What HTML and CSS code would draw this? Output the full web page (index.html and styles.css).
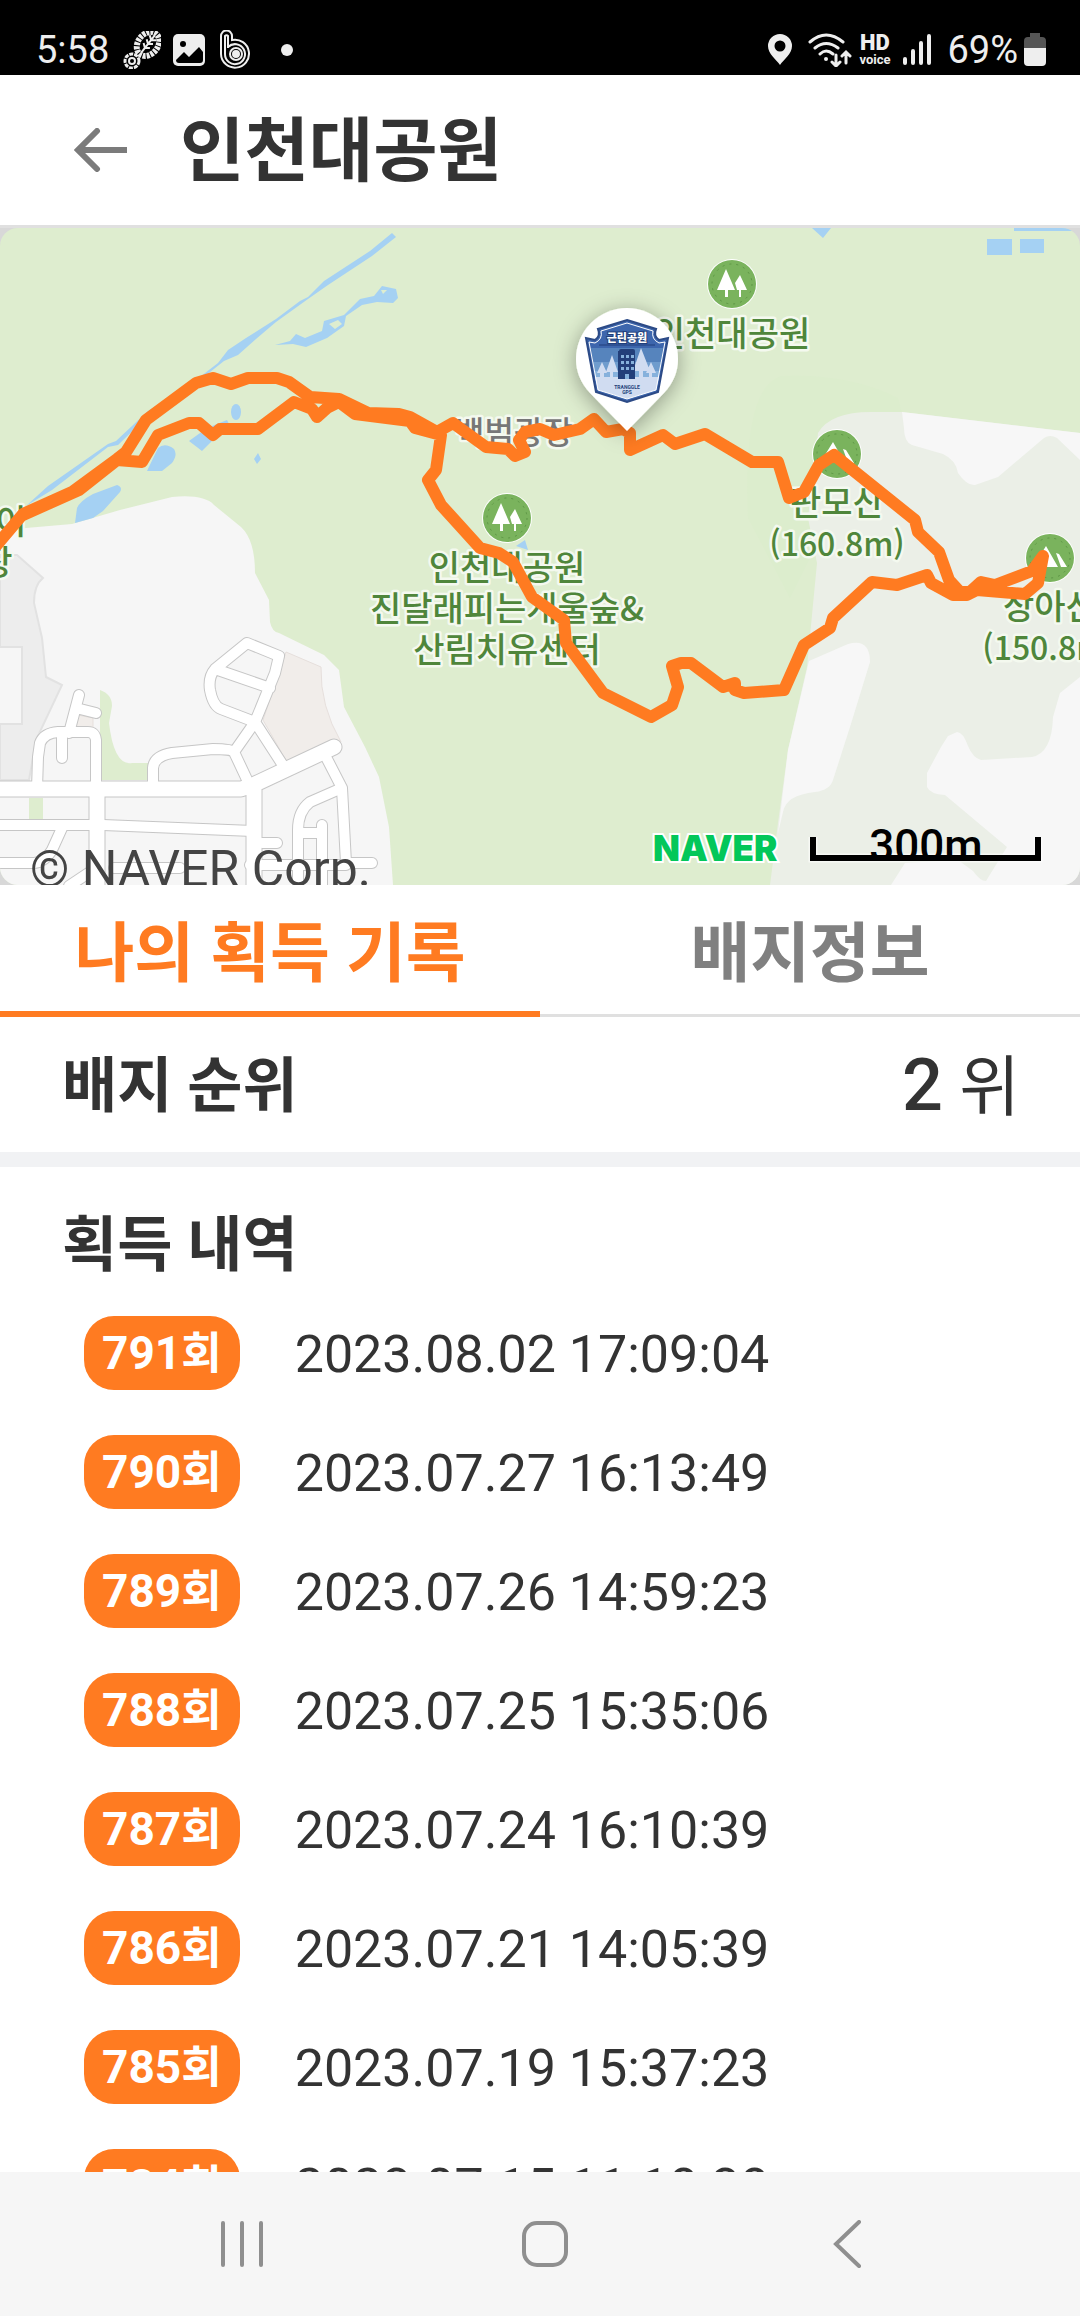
FILE: index.html
```
<!DOCTYPE html>
<html lang="ko">
<head>
  <meta charset="UTF-8" />
  <meta name="viewport" content="width=device-width, initial-scale=1.0"/>
  <title>인천대공원</title>
  <link rel="stylesheet" href="styles.css">
</head>
<body>
  <div class="status-bar">
    <div class="status-left">
      <span class="clock">5:58</span>
      <svg class="ic-shoe" width="38" height="38" viewBox="0 0 38 38">
        <g transform="rotate(38 25 13)">
          <ellipse cx="25" cy="13" rx="10" ry="13" fill="none" stroke="#eee" stroke-width="6" stroke-dasharray="3 1"/>
          <path d="M25 2v22M21 5l4 3 4-3M21 10l4 3 4-3M21 15l4 3 4-3" stroke="#eee" stroke-width="2" fill="none"/>
        </g>
        <circle cx="9" cy="30" r="7" fill="none" stroke="#eee" stroke-width="3" stroke-dasharray="4 1"/>
        <circle cx="9" cy="30" r="3" fill="none" stroke="#eee" stroke-width="2"/>
      </svg>
      <svg class="ic-image" width="32" height="32" viewBox="0 0 32 32">
        <rect width="32" height="32" rx="5" fill="#eee"/>
        <circle cx="10" cy="10" r="3" fill="#000"/>
        <path d="M3 26l8-8 5 5 10-10 4 5v8q0 3-3 3H6q-3 0-3-3z" fill="#000"/>
      </svg>
      <svg class="ic-band" width="32" height="40" viewBox="0 0 32 40" fill="none" stroke="#eee" stroke-width="2">
        <path d="M1 24V6a5 5 0 0 1 11 0v4a14 14 0 1 1-11 14z"/>
        <path d="M5 24V6a2 2 0 0 1 3 0v12M8 17a10 10 0 1 1-3 7"/>
        <circle cx="16" cy="24" r="6"/>
        <circle cx="16" cy="24" r="3" fill="#eee"/>
      </svg>
      <span class="dot"></span>
    </div>
    <div class="status-right">
      <svg class="ic-pin" width="24" height="31" viewBox="0 0 24 31">
        <path fill="#eee" fill-rule="evenodd" d="M12 0a12 12 0 0 1 12 12c0 8-8 13-12 19C8 25 0 20 0 12A12 12 0 0 1 12 0zm0 6.500a5.500 5.500 0 1 0 0 11 5.500 5.500 0 0 0 0-11z"/>
      </svg>
      <svg class="ic-wifi" width="44" height="34" viewBox="0 0 44 34" fill="none" stroke="#eee" stroke-width="3" stroke-linecap="round">
        <path d="M2 9q16-14 33 0M7 15q11-9 23 0M12 21q6-6 13 0"/>
        <circle cx="18" cy="26" r="2" fill="#eee" stroke="none"/>
        <path d="M28 22v10M24 29l4 4 4-4M38 30V20M34 23l4-4 4 4"/>
      </svg>
      <span class="hd"><b>HD</b><small>voice</small></span>
      <svg class="ic-signal" width="28" height="31" viewBox="0 0 28 31" stroke="#eee" stroke-width="4" stroke-linecap="round">
        <path d="M2 25v4M10 17v12M18 9v20M26 2v27"/>
      </svg>
      <span class="percent">69%</span>
      <svg width="22" height="33" viewBox="0 0 22 33">
        <path d="M6 0h10v4h2q4 0 4 4v8H0V8q0-4 4-4h2z" fill="#555"/>
        <path d="M0 15h22v14q0 4-4 4H4q-4 0-4-4z" fill="#eee"/>
      </svg>
    </div>
  </div>

  <header class="title-bar">
    <button class="back-btn" aria-label="뒤로">
      <svg width="54" height="44" viewBox="0 0 54 44" fill="none" stroke="#7b7b7b" stroke-width="6">
        <path d="M53 22H5"/>
        <path d="M23 3L4 22l19 19" stroke-linecap="round"/>
      </svg>
    </button>
    <h1>인천대공원</h1>
  </header>

  <main class="content">
    <div class="map">
      <svg class="map-svg" viewBox="0 0 1080 657">
        <defs>
          <g id="pine">
            <circle r="25" fill="#fff"/>
            <circle r="24" fill="#7ab35d"/>
            <circle r="20" fill="none" stroke="#5d9645" stroke-width="1" stroke-dasharray="2 5"/>
            <path d="M-6-15L3 6h-7v7h-3V6h-8zM8-9l7 15H9v7H7V6H5L3-1z" fill="#fff"/>
          </g>
          <g id="peak">
            <circle r="25" fill="#fff"/>
            <circle r="24" fill="#7ab35d"/>
            <circle r="20" fill="none" stroke="#5d9645" stroke-width="1" stroke-dasharray="2 5"/>
            <path d="M-17 9L-4-12 8 9zM6-5L9-4l8 13h-6z" fill="#fff"/>
          </g>
          <filter id="pinShadow" x="-50%" y="-50%" width="200%" height="200%">
            <feDropShadow dx="0" dy="4" stdDeviation="11" flood-color="#000" flood-opacity="0.35"/>
          </filter>
          <g id="streets">
            <path class="wide" d="M-9 561H241L253 557 334 519M254 560V670M97 561V670"/>
            <path d="M-9 597H103L253 603M96 560V512Q95 504 88 504H58Q44 505 40 515L38 529 37 561M62 505V530M69 505L79 467M76 480L96 485"/>
            <path d="M255 494L221 481Q213 478 210 462 208 449 215 441L247 415 279 428 275 445ZM215 441L270 460M255 494L234 524Q231 521 213 521L172 525Q154 528 153 540V560M234 524L250 558M255 494L286 542"/>
            <path d="M262 615H277M325 527L342 560 346 635H372M342 560L310 574Q298 583 298 602V670M298 605H320M322 597V670M-9 635H34Q45 634 52 622L62 600M69 658L90 644M250 637H346M114 640H180"/>
          </g>
        </defs>

        <!-- land -->
        <rect width="1080" height="657" fill="#deedcf"/>
        <path d="M781 148Q850 145 898 170L902 185 817 300 810 330 790 370 748 290Q742 160 781 148Z" fill="#dcedcd"/>
        <path d="M0 304L26 300 72 296 120 282 172 269Q204 266 214 277L241 299Q255 312 255 345L269 372 270 394Q272 404 279 405L324 427 339 442 344 479 365 519 379 549 389 599 393 657H0Z" fill="#f6f6f6"/>
        <path d="M817 335L808 290 818 205Q830 184 871 184H902L1080 205V657H770L778 595 788 522 807 439 817 335Z" fill="#ebefe7"/>
        <path d="M902 184L1080 205V232L1057 210Q1050 206 1044 210L998 249 975 257Q967 258 958 245 956 232 943 226L912 217Q904 214 904 200Z" fill="#f7f7f7"/>
        <path d="M809 433L848 416Q870 410 870 434L850 499 833 552Q830 562 815 564 786 567 783 584L778 605 788 522Z" fill="#f7f7f7"/>
        <path d="M1080 449L1060 465 1053 489Q1052 525 1032 529L981 532Q973 530 968 518 963 504 957 504L948 508 941 519 927 545V559Q930 566 945 567L1007 619 986 653Q980 653 973 643L958 632 905 635 891 657H1080Z" fill="#f7f7f7"/>
        <path d="M0 327H17L43 350Q34 357 34 375L42 410 46 449 62 457 36 512 29 552H0Z" fill="#ededed" stroke="#e2e2e2" stroke-width="2"/>
        <rect x="-2" y="419" width="24" height="77" fill="#f6f6f6" stroke="#e2e2e2" stroke-width="2"/>
        <path d="M100 462Q112 466 112 478L109 495Q114 538 132 535H148V552H100ZM29 570H43V594H29Z" fill="#deedcf"/>
        <path d="M286 424L321 439Q320 478 341 514L288 536 263 492ZM78 487L93 490V502H74Z" fill="#f1edea" stroke="#e6dfdc" stroke-width="1"/>

        <!-- water -->
        <g fill="#a5d1f3">
          <path d="M392 5L396 9 372 28 328 57 308 71 276 94 256 111 238 127 224 133 200 152 148 188 118 217 108 219 52 262 26 278 48 258 108 216 116 213 148 183 196 152 218 135 228 122 246 110 276 91 300 73 308 69 324 53 370 23Z"/>
          <path fill-rule="evenodd" d="M275 117L290 113 296 106 305 110 322 103 324 93 344 87 360 71 374 68 382 58 396 61 398 70 393 75 377 74 362 77 346 88 344 98 327 110 306 119 293 116ZM329 96L338 92 342 96 335 101ZM381 62L387 62 383 66Z"/>
          <path d="M75 295L77 280Q80 273 93 266L117 257Q123 259 120 264L103 283 93 290ZM147 243L158 220Q165 214 174 221 178 227 172 235L162 243ZM189 213L207 200 227 192 229 196 202 223Z"/>
          <ellipse cx="236" cy="184" rx="5" ry="8"/>
          <path d="M254 231L258 225 261 231 257 236ZM812 0H831L823 10ZM987 11H1012V27H987ZM1020 11H1044V25H1020ZM1014 0H1080V3H1014ZM516 318L525 312 528 322Z"/>
        </g>

        <use href="#streets" class="street-edge"/>
        <use href="#streets" class="street-fill"/>

        <use href="#pine" x="732" y="56"/>
        <use href="#pine" x="507" y="290"/>
        <use href="#peak" x="837" y="226"/>
        <use href="#peak" x="1050" y="330"/>

        <g class="map-label">
          <text x="732" y="118">인천대공원</text>
          <text x="507" y="352">인천대공원</text>
          <text x="507" y="393">진달래피는개울숲&amp;</text>
          <text x="507" y="434">산림치유센터</text>
          <text x="837" y="287">판모산</text>
          <text class="elevation" x="837" y="328">(160.8m)</text>
          <text x="1050" y="391">상아산</text>
          <text class="elevation" x="1050" y="432">(150.8m)</text>
          <text x="11" y="306">이</text>
          <text x="-3" y="347">장</text>
          <text class="place" x="514" y="216">백범광장</text>
        </g>

        <path class="route" d="M-4 318L23 286 72 264 117 231 126 224 146 192 196 155 213 150 231 156 248 150H277L289 154 310 169 339 171 368 185 399 186 410 189 437 204 453 195 486 219 508 221 515 228 525 224 519 212 525 204 540 201 554 207 580 201 594 191 606 204 623 201 630 205V222L663 207 675 216 705 206 752 234H778L789 270 804 264 819 237 834 227 915 292 918 304 939 324 949 352 960 364H970L981 354 995 357 1032 343 1043 328 1038 355 1025 366 977 362 967 367H953L931 355 927 347 897 357 872 354 833 390 830 400 804 417 784 462 744 465 735 462V455L723 459 691 435H681L672 438 678 459 672 477 651 489 603 465 566 415 564 392 532 369 513 334 499 325 480 320 441 277 428 252 436 242 441 207 415 200 410 193 355 186 339 174 327 180 317 189 312 181 294 174 258 201H220L213 207 199 195H189L158 207 142 234 117 232 79 262 23 287"/>

        <!-- badge pin -->
        <path d="M627 203L590 165Q576 150 576 131A51 51 0 0 1 678 131Q678 150 664 165Z" fill="#fff" filter="url(#pinShadow)"/>
        <path d="M627 92L656 101Q653 108 659 112L668 110 658 164 627 174 596 164 586 110 595 112Q601 108 598 101Z" fill="#3d66ad" stroke="#2c4a86" stroke-width="2"/>
        <path d="M591 120H663L661 134H593Z" fill="#5684bd"/>
        <path d="M593 134H661L659 148H595Z" fill="#6f9ccd"/>
        <path d="M595 143H659V150H595Z" fill="#86b1dc"/>
        <path d="M595 149H659L656 162 627 171 598 162Z" fill="#d0dcf1"/>
        <path d="M602 134L607 145H604V150H600V145H597ZM612 127L618 144H613V150H610V144H606ZM641 120L650 143H643V150H639V143H633ZM651 134L656 145H652V150H649V145H646Z" fill="#d0dcf1"/>
        <path d="M619 123Q619 121 621 121H633Q635 121 635 123V151H618V123Z" fill="#233f7a"/>
        <path d="M621 127h3v3h-3zM626 127h3v3h-3zM631 127h3v3h-3zM621 133h3v3h-3zM626 133h3v3h-3zM631 133h3v3h-3zM621 139h3v3h-3zM626 139h3v3h-3zM631 139h3v3h-3zM625 146h4v5h-4z" fill="#86b1dc"/>
        <path d="M627 95L653 103Q651 111 659 115L665 114 656 162 627 171 598 162 589 114 595 115Q603 111 601 103Z" fill="none" stroke="#fff" stroke-width="1"/>
        <path d="M599 117H655" stroke="#233f7a" stroke-width="1"/>
        <text class="badge-name" x="627" y="114">근린공원</text>
        <text class="badge-brand" x="627" y="161">TRANGGLE</text>
        <text class="badge-brand" x="627" y="166">GPS</text>

        <text class="naver" x="653" y="633">NAVER</text>
        <path d="M813 609V630H1038V609" fill="none" stroke="#fff" stroke-width="9" opacity="0.6"/>
        <text class="scale-text" x="926" y="633">300m</text>
        <path d="M813 609V630H1038V609" fill="none" stroke="#000" stroke-width="6"/>
        <text class="copyright" x="30" y="658">© NAVER Corp.</text>
      </svg>
    </div>

    <nav class="tabs">
      <button class="tab active">나의 획득 기록</button>
      <button class="tab">배지정보</button>
    </nav>

    <section class="rank">
      <h2>배지 순위</h2>
      <p class="rank-value"><b>2</b> 위</p>
    </section>

    <section class="history">
      <h2>획득 내역</h2>
      <ul class="history-list">
        <li><span class="count">791<span>회</span></span><time>2023.08.02 17:09:04</time></li>
        <li><span class="count">790<span>회</span></span><time>2023.07.27 16:13:49</time></li>
        <li><span class="count">789<span>회</span></span><time>2023.07.26 14:59:23</time></li>
        <li><span class="count">788<span>회</span></span><time>2023.07.25 15:35:06</time></li>
        <li><span class="count">787<span>회</span></span><time>2023.07.24 16:10:39</time></li>
        <li><span class="count">786<span>회</span></span><time>2023.07.21 14:05:39</time></li>
        <li><span class="count">785<span>회</span></span><time>2023.07.19 15:37:23</time></li>
        <li><span class="count">784<span>회</span></span><time>2023.07.15 11:18:38</time></li>
      </ul>
    </section>
  </main>

  <footer class="nav-bar">
    <button aria-label="최근 앱">
      <svg width="48" height="48" viewBox="0 0 48 48" stroke="#8f8f8f" stroke-width="4" stroke-linecap="round">
        <path d="M5 3v42M24 3v42M43 3v42"/>
      </svg>
    </button>
    <button aria-label="홈">
      <svg width="48" height="48" viewBox="0 0 48 48" fill="none" stroke="#8f8f8f" stroke-width="4">
        <rect x="3" y="3" width="42" height="42" rx="13"/>
      </svg>
    </button>
    <button aria-label="뒤로 가기">
      <svg width="48" height="48" viewBox="0 0 48 48" fill="none" stroke="#8f8f8f" stroke-width="4" stroke-linecap="round">
        <path d="M35 2L12 24l23 22"/>
      </svg>
    </button>
  </footer>
</body>
</html>
```

FILE: styles.css
```
* {
  box-sizing: border-box;
}

body {
  margin: 0;
  height: 100vh;
  display: flex;
  flex-direction: column;
  overflow: hidden;
  background: #fff;
  color: #333;
  font-family: Roboto, 'Noto Sans CJK KR', sans-serif;
}

h1,
h2,
p,
ul {
  margin: 0;
  padding: 0;
}

button {
  border: none;
  background: none;
  padding: 0;
  font-family: inherit;
  cursor: pointer;
}

svg {
  display: block;
  flex: none;
}

/* status bar */
.status-bar {
  height: 75px;
  flex: none;
  padding: 24px 34px 0 36px;
  display: flex;
  justify-content: space-between;
  background: #000;
  color: #eee;
  font-size: 38px;
  line-height: 50px;
}

.status-left,
.status-right {
  display: flex;
  align-items: center;
}

.ic-shoe {
  margin-left: 14px;
}

.ic-image {
  margin-left: 12px;
}

.ic-band {
  margin-left: 15px;
}

.dot {
  width: 12px;
  height: 12px;
  margin-left: 29px;
  border-radius: 50%;
  background: #eee;
}

.ic-wifi {
  margin-left: 16px;
}

.hd {
  margin-left: 7px;
  display: flex;
  flex-direction: column;
  align-items: center;
  font-weight: bold;
}

.hd b {
  font-size: 22px;
  line-height: 20px;
}

.hd small {
  font-size: 13px;
  line-height: 13px;
}

.ic-signal {
  margin: 0 16px 0 13px;
}

.percent {
  margin-right: 6px;
}

/* title */
.title-bar {
  height: 150px;
  flex: none;
  padding: 0 74px;
  display: flex;
  align-items: center;
  gap: 52px;
}

.title-bar h1 {
  padding-top: 4px;
  font-size: 70px;
  line-height: 80px;
  font-weight: bold;
}

.content {
  flex: 1;
  min-height: 0;
  overflow: hidden;
}

/* map */
.map {
  border-top: 3px solid #e0e0e0;
  background: #d8d8d8;
}

.map-svg {
  width: 100%;
  height: auto;
  border-radius: 18px;
}

.street-edge,
.street-fill {
  fill: none;
  stroke-linecap: round;
  stroke-linejoin: round;
}

.street-edge {
  --wide: 17px;
  stroke: #c6c6c6;
  stroke-width: 12px;
}

.street-fill {
  --wide: 15px;
  stroke: #fff;
  stroke-width: 10px;
}

.wide {
  stroke-width: var(--wide);
}

.map-label {
  font-family: 'Noto Sans CJK KR', sans-serif;
  font-size: 34px;
  font-weight: 500;
  text-anchor: middle;
  fill: #4f863b;
  stroke: #f4f9ef;
  stroke-width: 5px;
  stroke-linejoin: round;
  paint-order: stroke;
}

.elevation {
  font-size: 32px;
}

.place {
  font-size: 32px;
  fill: #777;
}

.route {
  fill: none;
  stroke: #ff7b21;
  stroke-width: 12px;
  stroke-linecap: round;
  stroke-linejoin: round;
}

.badge-name {
  font: 900 11px 'Noto Sans CJK KR', sans-serif;
  text-anchor: middle;
  fill: #fff;
  stroke: #233f7a;
  stroke-width: 2px;
  paint-order: stroke;
}

.badge-brand {
  font: bold 5px Roboto, sans-serif;
  text-anchor: middle;
  fill: #233f7a;
}

.naver {
  font: 900 35px Inter, sans-serif;
  fill: #03c75a;
  stroke: #fff;
  stroke-width: 4px;
  paint-order: stroke;
}

.scale-text {
  font: 500 44px Roboto, sans-serif;
  text-anchor: middle;
}

.copyright {
  font: 50px Roboto, sans-serif;
  fill: #444;
}

/* tabs */
.tabs {
  display: flex;
}

.tab {
  flex: 1;
  height: 132px;
  padding-bottom: 3px;
  border-bottom: 3px solid #e0e0e0;
  color: #808080;
  font-size: 65px;
  font-weight: bold;
}

.tab.active {
  padding-bottom: 0;
  border-bottom: 6px solid #ff7b21;
  color: #ff7b21;
}

/* rank */
.rank {
  height: 150px;
  padding: 4px 60px 0 62px;
  display: flex;
  align-items: center;
  justify-content: space-between;
  border-bottom: 15px solid #f1f2f4;
}

h2 {
  font-size: 60px;
  line-height: 70px;
  font-weight: bold;
}

.rank-value {
  font-size: 66px;
  line-height: 80px;
}

.rank-value b {
  font-size: 72px;
  font-weight: 500;
}

/* history */
.history h2 {
  padding: 44px 62px 35px;
}

.history-list {
  list-style: none;
  padding: 0 84px;
  display: flex;
  flex-direction: column;
  gap: 45px;
}

.history-list li {
  height: 74px;
  display: flex;
  align-items: center;
  gap: 55px;
}

.count {
  height: 74px;
  padding: 0 18px;
  border-radius: 30px;
  background: #ff7b21;
  color: #fff;
  font-size: 46px;
  line-height: 74px;
  font-weight: bold;
}

.count span {
  font-size: 44px;
}

.history-list time {
  padding-top: 4px;
  font-size: 52px;
  line-height: 70px;
  white-space: nowrap;
}

/* system navigation */
.nav-bar {
  height: 144px;
  flex: none;
  padding: 0 81px 0 90px;
  display: flex;
  background: #f6f6f6;
}

.nav-bar button {
  flex: 1;
  display: flex;
  align-items: center;
  justify-content: center;
}
```
